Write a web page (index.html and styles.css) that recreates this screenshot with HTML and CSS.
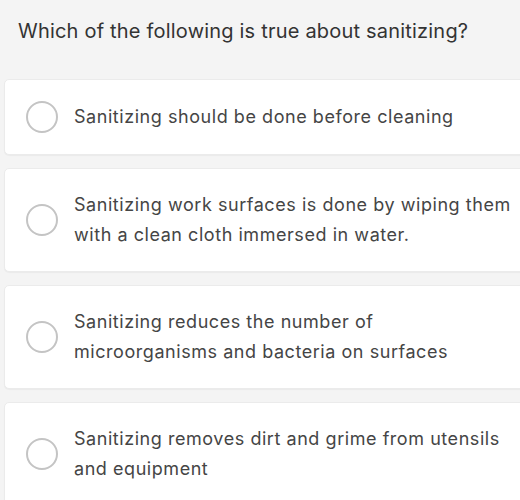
FILE: index.html
```html
<!DOCTYPE html>
<html lang="en">
<head>
  <meta charset="UTF-8" />
  <title>Sanitizing quiz</title>
  <link rel="stylesheet" href="styles.css">
</head>
<body>

  <!-- QUESTION -->
  <div class="question">
    <h1>Which of the following is true about sanitizing?</h1>
  </div>

  <!-- ANSWER OPTIONS -->
  <div class="options">
    <label class="option">
      <span class="radio"></span>
      <span class="option-text">Sanitizing should be done before cleaning</span>
    </label>
    <label class="option">
      <span class="radio"></span>
      <span class="option-text">Sanitizing work surfaces is done by wiping them with a clean cloth immersed in water.</span>
    </label>
    <label class="option">
      <span class="radio"></span>
      <span class="option-text">Sanitizing reduces the number of<br>microorganisms and bacteria on surfaces</span>
    </label>
    <label class="option">
      <span class="radio"></span>
      <span class="option-text">Sanitizing removes dirt and grime from utensils and equipment</span>
    </label>
  </div>

</body>
</html>
```

FILE: styles.css
```css
/* ------------------------------
   GENERAL
-------------------------------*/
html, body {
  margin: 0;
  padding: 0;
  overflow: hidden;
}
body {
  font-family: Inter, "Liberation Sans", Arial, sans-serif;
  background: #f4f4f4;
  color: #3a3a3a;
  padding: 0 4px;
}

/* ---------------
   QUESTION
   ---------------*/
.question {
  padding: 17px 14px 0;
}
.question h1 {
  margin: 0;
  font-size: 20px;
  font-weight: normal;
  letter-spacing: 0.2px;
  line-height: 28px;
  color: #333;
}

/* ---------------
   OPTIONS
   ---------------*/
.options {
  width: 540px;
  margin-top: 34px;
  display: flex;
  flex-direction: column;
  gap: 13px;
}
.option {
  display: flex;
  align-items: center;
  gap: 16px;
  background: #fff;
  border: 1px solid #ebebeb;
  border-radius: 5px;
  padding: 21px 16px 21px 21px;
  box-shadow: 0 1px 1px rgba(0, 0, 0, 0.04);
}
.radio {
  flex: none;
  width: 28px;
  height: 28px;
  border: 2px solid #c4c4c4;
  border-radius: 50%;
}
.option-text {
  max-width: 444px;
  font-size: 18px;
  letter-spacing: 0.55px;
  line-height: 30px;
  color: #454545;
}
```
